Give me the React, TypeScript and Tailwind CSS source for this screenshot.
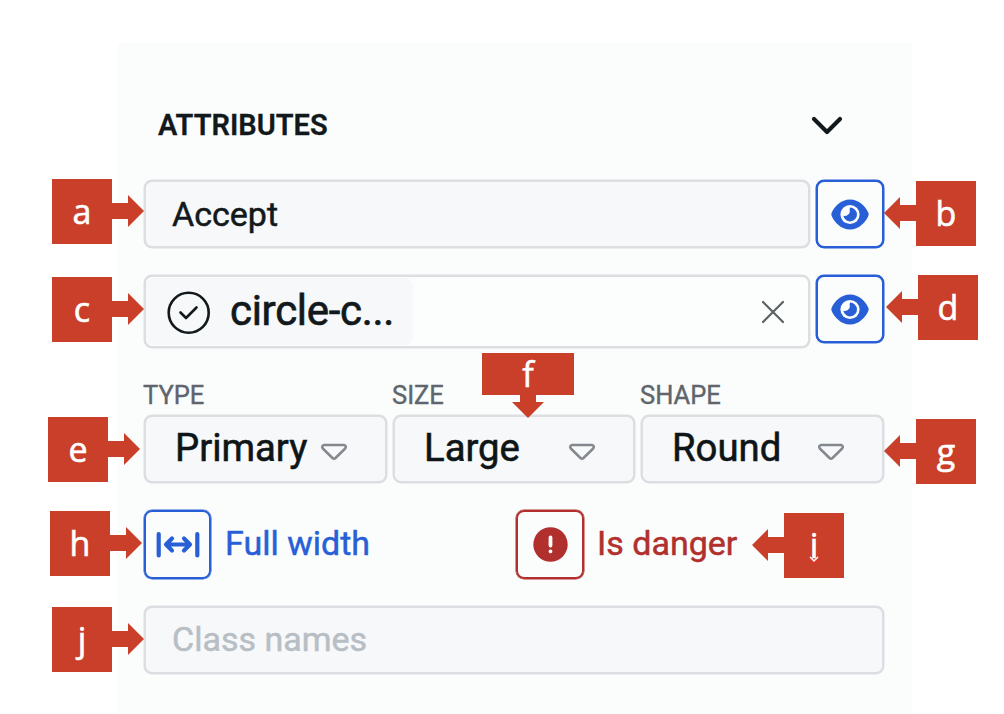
import type { ReactNode } from "react";

type Side = "left" | "right";

function Callout({ label, side, place, children }: { label: string; side: Side; place: string; children?: ReactNode }) {
  return (
    <div className={`absolute flex h-[65px] items-center ${side === "right" ? "flex-row-reverse" : ""} ${place}`}>
      <div className="relative h-[65px] w-[60px] bg-[#ca3f2a] text-center font-['Open_Sans'] text-[34px] leading-[64px] text-white [-webkit-text-stroke:0.6px_white]">
        {label}
        {children}
      </div>
      <svg width="32" height="32" viewBox="0 0 32 32" className={side === "right" ? "-mt-px -scale-x-100" : "-mt-px"} fill="#ca3f2a">
        <path d="M0 8H16V0L32 16L16 32V24H0Z" />
      </svg>
    </div>
  );
}

function EyeButton() {
  return (
    <button className="flex h-[68px] w-[68px] shrink-0 items-center justify-center rounded-[8px] border-2 border-[#295fd6] bg-[#fbfdfd] pr-px shadow-[0_0_0_0.5px_#295fd6]">
      <svg width="38" height="31" viewBox="0 0 38 31">
        <path d="M19 0.5C10 .5 3.400 7.500 .7 13.700a4 4 0 0 0 0 3.300C3.400 23.300 10 30.500 19 30.500s15.600-7.200 18.300-13.500a4 4 0 0 0 0-3.300C34.600 7.500 28 .5 19 .5Z" fill="#295fd6" />
        <circle cx="19" cy="15.500" r="9.600" fill="#fbfdfd" />
        <path d="M19 8.600a6.900 6.900 0 1 1-6.700 8.200c3.700 1 7.600-2 6.300-6.200Z" fill="#295fd6" />
      </svg>
    </button>
  );
}

function Select({ label, value, width }: { label: string; value: string; width: string }) {
  return (
    <div className={width}>
      <div className="-ml-px h-[36px] pt-px text-[25.500px] leading-[30px] text-[#5f656c] [-webkit-text-stroke:0.4px_#5f656c]">{label}</div>
      <div className="flex h-[68px] items-center justify-between rounded-[8px] border-2 border-[#dcdee2] bg-[#f7f8fa] pr-[37px] pl-[29px] shadow-[0_0_0_0.5px_#dcdee2]">
        <span className="-mt-[3px] text-[38.300px] leading-[48px] text-[#0e1518] [-webkit-text-stroke:0.6px_#0e1518]">{value}</span>
        <svg width="28" height="18" viewBox="0 0 28 18" className="mt-[6px] shrink-0" fill="none" stroke="#83898f" strokeWidth="2.500" strokeLinejoin="round">
          <path d="M4 2H24Q27 3 25.200 5.500L15.500 15Q14 16.300 12.500 15L2.800 5.500Q1 3 4 2Z" />
        </svg>
      </div>
    </div>
  );
}

export default function App() {
  return (
    <div className="relative h-[714px] w-[1004px] overflow-hidden bg-white pt-[43px] pl-[118px] font-[Roboto]">
      <main className="h-[670px] w-[794px] bg-[#fbfdfd] pr-[28px] pl-[26px]">
        <header className="flex h-[137px] items-center justify-between pt-[28px] pr-[41px] pl-[14px]">
          <h2 className="-mt-[2px] text-[29px] leading-[34px] font-semibold text-[#12191c] [-webkit-text-stroke:0.3px_#12191c]">ATTRIBUTES</h2>
          <svg width="32" height="20" viewBox="0 0 32 20" fill="none" stroke="#12191c" strokeWidth="4.200" strokeLinecap="round" strokeLinejoin="round">
            <path d="M3 3L16 16L29 3" />
          </svg>
        </header>

        <div className="flex h-[68px] justify-between">
          <div className="flex w-[666px] items-center rounded-[8px] border-2 border-[#dcdee2] bg-[#f7f8fa] pl-[26px] text-[34px] text-[#12191c] shadow-[0_0_0_0.5px_#dcdee2] [-webkit-text-stroke:0.5px_#12191c]">Accept</div>
          <EyeButton />
        </div>

        <div className="mt-[27px] flex h-[73px] items-start justify-between">
          <div className="flex h-[73px] w-[666px] items-center justify-between rounded-[8px] border-2 border-[#dcdee2] bg-[#fcfefe] pr-[23px] shadow-[0_0_0_0.5px_#dcdee2]">
            <div className="flex h-[67px] w-[267px] items-center rounded-[8px] bg-[#f7f8fa] pl-[20px] text-[#12191c]">
              <svg width="44" height="44" viewBox="0 0 44 44" fill="none" stroke="currentColor" strokeWidth="2.600" strokeLinecap="round" strokeLinejoin="round" className="shrink-0">
                <circle cx="22.700" cy="22.700" r="20" />
                <path d="M14.500 22.500L20 28L30.500 17.500" />
              </svg>
              <span className="-mt-px pl-[20px] text-[42px] leading-[50px] tracking-[-0.300px] [-webkit-text-stroke:0.7px_#12191c]">circle-c...</span>
            </div>
            <svg width="24" height="24" viewBox="0 0 24 24" fill="none" stroke="#5b6167" strokeWidth="2.200" strokeLinecap="round">
              <path d="M2 2L22 22M22 2L2 22" />
            </svg>
          </div>
          <EyeButton />
        </div>

        <div className="mt-[31px] flex justify-between">
          <Select label="TYPE" value="Primary" width="w-[243px]" />
          <Select label="SIZE" value="Large" width="w-[242px]" />
          <Select label="SHAPE" value="Round" width="w-[243px]" />
        </div>

        <div className="mt-[27px] flex h-[69px]">
          <div className="flex w-[372px] items-center text-[#295fd6]">
            <button className="flex h-[69px] w-[67px] items-center justify-center rounded-[8px] border-2 border-[#295fd6] shadow-[0_0_0_0.5px_#295fd6]">
              <svg width="44" height="27" viewBox="0 0 44 27" fill="none" stroke="currentColor" strokeWidth="4.200" strokeLinecap="round" strokeLinejoin="round">
                <path d="M2.700 3V24.500M41.300 3V24.500M10 13.500H34M16 7.500L10 13.500L16 19.500M28 7.500L34 13.500L28 19.500" />
              </svg>
            </button>
            <span className="-mt-[2px] pl-[14px] text-[34px] [-webkit-text-stroke:0.5px_#295fd6]">Full width</span>
          </div>
          <div className="flex items-center text-[#b1302d]">
            <button className="flex h-[69px] w-[68px] items-center justify-center rounded-[8px] border-2 border-[#b1302d] shadow-[0_0_0_0.5px_#b1302d]">
              <svg width="35" height="35" viewBox="0 0 35 35">
                <circle cx="17.500" cy="17.500" r="17.200" fill="currentColor" />
                <path d="M17.500 10.500V18.500M17.500 24.300V24.400" stroke="#fbfdfd" strokeWidth="3.800" strokeLinecap="round" />
              </svg>
            </button>
            <span className="-mt-[2px] pl-[13px] text-[34px] [-webkit-text-stroke:0.5px_#b1302d]">Is danger</span>
          </div>
        </div>

        <div className="mt-[27px] flex h-[68px] items-center rounded-[8px] border-2 border-[#dcdee2] bg-[#f7f8fa] pb-px pl-[26px] text-[34px] text-[#b7bec4] shadow-[0_0_0_0.5px_#dcdee2] [-webkit-text-stroke:0.5px_#b7bec4]">Class names</div>
      </main>

      <Callout label="a" side="left" place="left-[52px] top-[179px]" />
      <Callout label="b" side="right" place="left-[884px] top-[181px]" />
      <Callout label="c" side="left" place="left-[52px] top-[277px]" />
      <Callout label="d" side="right" place="left-[886px] top-[275px]" />
      <Callout label="e" side="left" place="left-[48px] top-[417px]" />
      <Callout label="g" side="right" place="left-[884px] top-[419px]" />
      <Callout label="h" side="left" place="left-[50px] top-[511px]" />
      <Callout label="i" side="right" place="left-[752px] top-[513px]">
        <svg width="12" height="8" viewBox="0 0 12 8" className="absolute top-[43px] left-[24px]" fill="none" strokeWidth="1.500">
          <path d="M2 2.500L6 6.500L10 2.500" stroke="#ed2a25" />
          <path d="M2 1L6 5L10 1" stroke="#fff" />
        </svg>
      </Callout>
      <Callout label="j" side="left" place="left-[52px] top-[607px]" />
      <div className="absolute top-[353px] left-[482px] flex w-[92px] flex-col items-center">
        <div className="h-[42px] w-full bg-[#ca3f2a] text-center font-['Open_Sans'] text-[34px] leading-[42px] text-white [-webkit-text-stroke:0.6px_white]">f</div>
        <svg width="32" height="23" viewBox="0 0 32 23" fill="#ca3f2a">
          <path d="M8 0H24V7H32L16 23L0 7H8Z" />
        </svg>
      </div>
    </div>
  );
}
